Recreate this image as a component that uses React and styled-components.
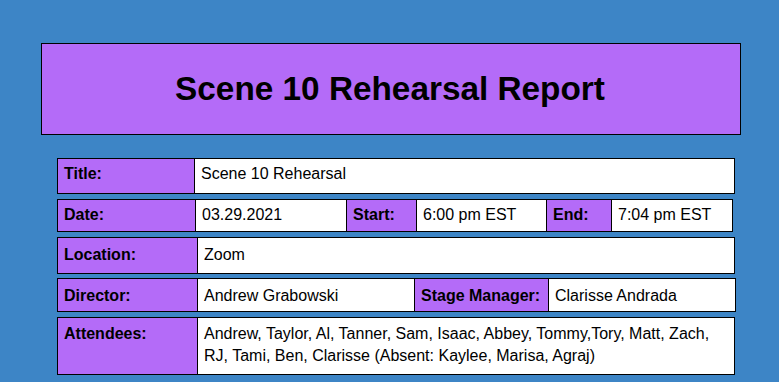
import React from "react";
import styled, { createGlobalStyle } from "styled-components";

const Global = createGlobalStyle`
  html, body { margin: 0; padding: 0; }
  body {
    background: #3d85c6;
    font-family: "Liberation Sans", Arial, sans-serif;
    color: #000;
  }
`;

const Page = styled.div`
  padding: 43px 0 20px 41px;
  display: flex;
  flex-direction: column;
  align-items: flex-start;
`;

const Header = styled.header`
  box-sizing: border-box;
  width: 700px;
  height: 92px;
  border: 1px solid #000;
  background: #b46bf8;
  display: flex;
  align-items: center;
  justify-content: center;
`;

const Heading = styled.h1`
  margin: 0;
  font-size: 33.33px;
  font-weight: 700;
  line-height: normal;
  position: relative;
  left: -1px;
`;

const Rows = styled.div`
  margin: 23px 0 0 16px;
  display: flex;
  flex-direction: column;
  gap: 5px;
`;

const Row = styled.div`
  box-sizing: border-box;
  display: flex;
  width: ${(p) => p.$w}px;
  height: ${(p) => p.$h}px;
  margin-bottom: ${(p) => p.$mb || 0}px;
  border: 1px solid #000;
  background: #fff;
  & > div {
    padding-top: ${(p) => p.$pt ?? 5}px;
  }
`;

const Cell = styled.div`
  box-sizing: border-box;
  ${(p) => (p.$w ? `width: ${p.$w}px; flex: none;` : "flex: 1;")}
  padding: 5px 6px 0;
  font-size: 16px;
  line-height: 21.5px;
  font-weight: ${(p) => (p.$label ? 700 : 400)};
  background: ${(p) => (p.$label ? "#b46bf8" : "#fff")};
  & + & {
    border-left: 1px solid #000;
  }
`;

export default function App() {
  return (
    <>
      <Global />
      <Page>
        <Header>
          <Heading>Scene 10 Rehearsal Report</Heading>
        </Header>
        <Rows>
          <Row $w={678} $h={36} $pt={4}>
            <Cell $label $w={136}>Title:</Cell>
            <Cell>Scene 10 Rehearsal</Cell>
          </Row>
          <Row $w={676} $h={33} $pt={4}>
            <Cell $label $w={137}>Date:</Cell>
            <Cell $w={151}>03.29.2021</Cell>
            <Cell $label $w={70}>Start:</Cell>
            <Cell $w={130}>6:00 pm EST</Cell>
            <Cell $label $w={65}>End:</Cell>
            <Cell>7:04 pm EST</Cell>
          </Row>
          <Row $w={678} $h={37} $mb={-1} $pt={6}>
            <Cell $label $w={139}>Location:</Cell>
            <Cell>Zoom</Cell>
          </Row>
          <Row $w={679} $h={34} $pt={6}>
            <Cell $label $w={139}>Director:</Cell>
            <Cell $w={217}>Andrew Grabowski</Cell>
            <Cell $label $w={134}>Stage Manager:</Cell>
            <Cell>Clarisse Andrada</Cell>
          </Row>
          <Row $w={678} $h={58} $pt={5}>
            <Cell $label $w={139}>Attendees:</Cell>
            <Cell>
              Andrew, Taylor, Al, Tanner, Sam, Isaac, Abbey, Tommy,Tory, Matt, Zach, RJ, Tami, Ben, Clarisse (Absent: Kaylee, Marisa, Agraj)
            </Cell>
          </Row>
        </Rows>
      </Page>
    </>
  );
}
